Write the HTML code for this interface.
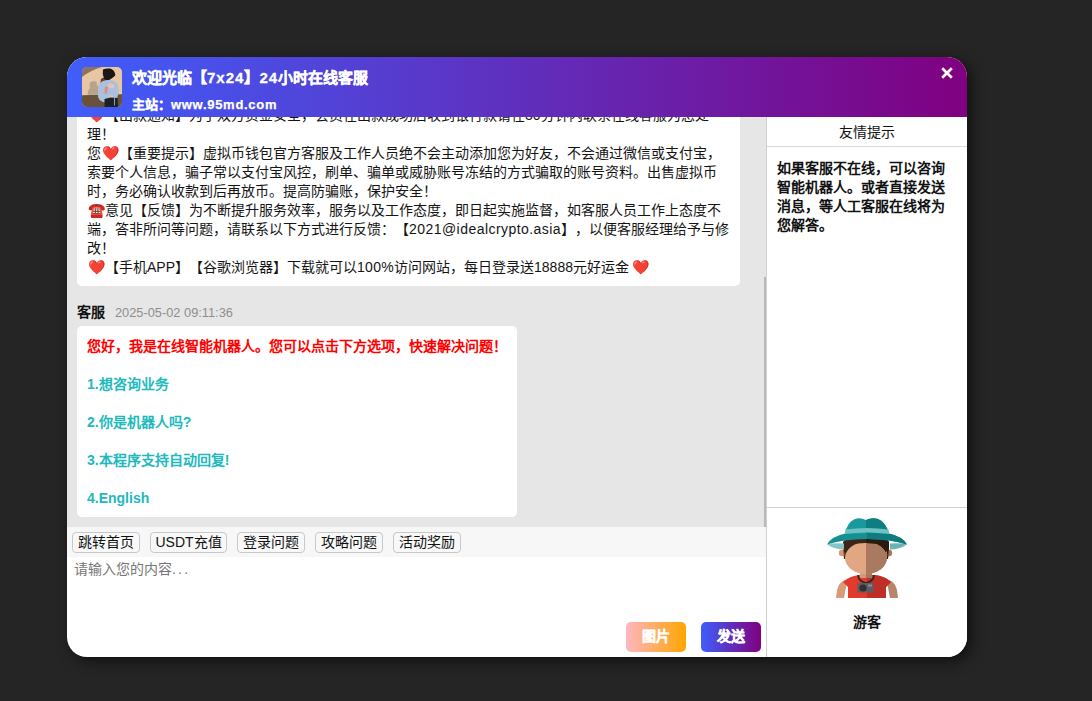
<!DOCTYPE html>
<html lang="zh-CN"><head><meta charset="utf-8">
<style>
*{margin:0;padding:0;box-sizing:border-box}
html,body{text-spacing-trim:space-all;width:1092px;height:701px;overflow:hidden;background:#252525;font-family:"Liberation Sans",sans-serif;font-size:14px;color:#222}
.dlg{position:absolute;left:67px;top:57px;width:900px;height:600px;border-radius:20px;overflow:hidden;background:#fff;box-shadow:4px 4px 14px rgba(0,0,0,.6)}
.chat{position:absolute;left:0;top:0;width:699px;height:470px;background:#e6e6e6;overflow:hidden}
.bub{position:absolute;left:10px;background:#fff;border-radius:5px;padding:10px;line-height:19px;white-space:nowrap;color:#141414}
.hdr{position:absolute;left:0;top:0;width:900px;height:60px;background:linear-gradient(90deg,#3f5efb,#800080)}
.av{position:absolute;left:15px;top:10px;width:40px;height:40px;border-radius:5px;overflow:hidden}
.t1{position:absolute;left:65px;top:11px;color:#fff;font-weight:bold;font-size:15px;line-height:20px;white-space:nowrap;-webkit-text-stroke:.3px #fff}
.t2{position:absolute;left:65px;top:39px;color:#fff;font-weight:bold;font-size:13px;line-height:18px;white-space:nowrap;-webkit-text-stroke:.25px #fff}
.x{position:absolute;left:874px;top:10px;width:12px;height:12px}
.sb{position:absolute;left:697px;top:220px;width:3px;height:250px;background:#b8b8b8}
.right{position:absolute;left:700px;top:60px;width:200px;height:540px;background:#fff}
.vline{position:absolute;left:699px;top:60px;width:1px;height:540px;background:#d0d0d0}
.rt{position:absolute;left:0;top:0;width:200px;height:30px;border-bottom:1px solid #d8d8d8;text-align:center;line-height:30px;font-size:14px;color:#111}
.tip{position:absolute;left:10px;top:42px;width:185px;font-weight:bold;line-height:19px;color:#111;white-space:nowrap}
.gline{position:absolute;left:0;top:390px;width:200px;height:1px;background:#d0d0d0}
.guest{position:absolute;left:0;top:497px;width:200px;text-align:center;font-weight:bold;color:#111;line-height:19px}
.tb{position:absolute;left:0;top:470px;width:699px;height:30px;background:#f7f7f7}
.btn{position:absolute;top:5px;height:21px;border:1px solid #c8c8c8;border-radius:4px;background:#f8f8f8;line-height:19px;text-align:center;color:#111;white-space:nowrap}
.ph{position:absolute;left:7px;top:503px;color:#777;line-height:19px}
.b2{position:absolute;top:565px;width:60px;height:30px;border-radius:5px;color:#fff;font-weight:bold;text-align:center;line-height:29px;-webkit-text-stroke:.4px #fff}
.lbl{position:absolute;left:10px;top:246px;white-space:nowrap;line-height:19px}
.lbl b{color:#111}
.lbl span{color:#8e8e8e;font-size:12.8px;margin-left:10px;position:relative;top:0px}
.ls{letter-spacing:1px}.ls2{letter-spacing:.7px}
.em{font-style:normal;margin-left:1px}
.red{color:#f00;font-weight:bold}
.tl{color:#22b9bd;font-weight:bold}
</style></head><body>
<div class="dlg">
  <div class="chat">
    <div class="bub" style="top:38px;width:663px;padding-top:11px;padding-bottom:9px"><i class="em">❤️</i>【出款通知】为了双方资金安全，会员在出款成功后收到银行款请在30分钟内联系在线客服为您处<br>理！<br>您<i class="em">❤️</i>【重要提示】虚拟币钱包官方客服及工作人员绝不会主动添加您为好友，不会通过微信或支付宝，<br>索要个人信息，骗子常以支付宝风控，刷单、骗单或威胁账号冻结的方式骗取的账号资料。出售虚拟币<br>时，务必确认收款到后再放币。提高防骗账，保护安全！<br><i class="em">☎️</i>意见【反馈】为不断提升服务效率，服务以及工作态度，即日起实施监督，如客服人员工作上态度不<br>端，答非所问等问题，请联系以下方式进行反馈：【<span style="letter-spacing:.45px">2021@idealcrypto.asia</span>】，以便客服经理给予与修<br>改！<br><i class="em">❤️</i>【手机APP】【谷歌浏览器】下载就可以<span style="letter-spacing:.3px">100%</span>访问网站，每日登录送18888元好运金<i class="em" style="margin-left:3px">❤️</i></div>
    <div class="lbl"><b>客服</b><span>2025-05-02 09:11:36</span></div>
    <div class="bub" style="top:269px;width:440px;height:191px;padding-top:11px"><span class="red">您好，我是在线智能机器人。您可以点击下方选项，快速解决问题！</span><br><br><span class="tl">1.想咨询业务</span><br><br><span class="tl">2.你是机器人吗?</span><br><br><span class="tl">3.本程序支持自动回复!</span><br><br><span class="tl">4.English</span></div>
    <div class="sb"></div>
  </div>
  <div class="tb">
    <div class="btn" style="left:5px;width:68px">跳转首页</div>
    <div class="btn" style="left:83px;width:77px">USDT充值</div>
    <div class="btn" style="left:170px;width:68px">登录问题</div>
    <div class="btn" style="left:248px;width:68px">攻略问题</div>
    <div class="btn" style="left:326px;width:68px">活动奖励</div>
  </div>
  <div class="ph">请输入您的内容<span style="letter-spacing:2.2px">...</span></div>
  <div class="b2" style="left:559px;background:linear-gradient(90deg,#ffb6c1,#ffa500)">图片</div>
  <div class="b2" style="left:634px;background:linear-gradient(90deg,#3f5efb,#800080)">发送</div>
  <div class="vline"></div>
  <div class="right">
    <div class="rt">友情提示</div>
    <div class="tip">如果客服不在线，可以咨询<br>智能机器人。或者直接发送<br>消息，等人工客服在线将为<br>您解答。</div>
    <div class="gline" style="top:390px"></div>
    <svg style="position:absolute;left:60px;top:400px" width="80" height="82" viewBox="0 0 80 82">
<path d="M10 73q2-8 8-10l2 2-3 16H9z" fill="#d99a78"/>
<path d="M70 73q-2-8-8-10l-2 2 3 16h8z" fill="#b7856a"/>
<path d="M16 65q6-6 17-7h14q11 1 17 7l-5 5v11H21V70z" fill="#e23b2c"/>
<path d="M40 58h7q11 1 17 7l-5 5v11H40z" fill="#be3026"/>
<rect x="33" y="52" width="12" height="9" fill="#d4997a"/>
<rect x="39" y="52" width="6" height="9" fill="#a9765c"/>
<path d="M31 58q0 6 8 8q8-2 8-8" fill="none" stroke="#2e2626" stroke-width="1.6"/>
<rect x="30.5" y="66" width="16" height="9.5" rx="1" fill="#5b5d60"/>
<circle cx="36" cy="71" r="3.6" fill="#2f3032"/>
<rect x="41" y="67.5" width="4" height="2" fill="#8c8f93"/>
<path d="M16 26q1-4 6-4h34q5 0 6 4l-1 16h-44z" fill="#3d2618"/>
<path d="M39 22h17q5 0 6 4l-1 16h-22z" fill="#2b1a10"/>
<circle cx="15" cy="36" r="3.2" fill="#d99a78"/>
<circle cx="62" cy="36" r="3.2" fill="#a9765c"/>
<ellipse cx="39" cy="41" rx="21" ry="16" fill="#e3a683"/>
<path d="M39 25a21 16 0 0 1 0 32z" fill="#a97a5f"/>
<path d="M16 26q1-4 6-4h34q5 0 6 4l-1 15q-1-10-5-13q-8-2-17-2q-9 0-17 2q-4 3-5 13z" fill="#3d2618"/>
<path d="M39 22h17q5 0 6 4l-1 15q-1-10-5-13q-8-2-17-2z" fill="#2b1a10"/>
<path d="M0 27.5q8-2 17-1l0 6q-9 0-17-5z" fill="#86c6c8"/>
<path d="M80 27.5q-8-2-17-1l0 6q9 0 17-5z" fill="#6fb0b2"/>
<path d="M0 27.5q4-8 20-11.5h40q16 3.5 20 11.5q-10-3-18-4q-10-1.5-22-1.5q-12 0-22 1.5q-8 1-18 4z" fill="#168f92"/>
<path d="M40 16h20q16 3.5 20 11.5q-10-3-18-4q-10-1.5-22-1.5z" fill="#0e7b7e"/>
<path d="M18 17q2-12 10-15q5-2 11 1q6-3 12-1q8 3 11 15z" fill="#19999c"/>
<path d="M39 3q6-3 12-1q8 3 11 15H39z" fill="#0d7f82"/>
<path d="M18.5 12.5q21-3 43 0l0.6 4.5q-22-3-44.2 0z" fill="#6fc2c3"/>
</svg>
    <div class="guest" style="top:496px">游客</div>
  </div>
  <div class="hdr">
    <div class="av"><svg width="40" height="40" viewBox="0 0 40 40">
<rect width="40" height="40" fill="#e7c7a3"/>
<path d="M0 0H20Q9 3 0 10Z" fill="#8b735f"/>
<path d="M0 28.3L40 27.2V40H0z" fill="#6a5139"/>
<path d="M8 15.5q2.5-2 6-1q1.5 1 .5 3q2.5 1.5 2.5 5v5.3H5.5q0-4.5 2.5-7q-1-1.5 0-5.3z" fill="#b7a38e"/>
<path d="M19 12q2-2 5-1l4 1-1 6h-9z" fill="#6b3a2e"/>
<path d="M16 22q0-6 5-8q4-1.5 7-1q6 1 8 5q1.5 5 0 10q-1 5-4 7l-9 .5q-6-1-7-6z" fill="#a9c0df"/>
<path d="M21 2.5q3-1.5 7-1q4 1 5 5q1 2-1.5 3.5q-2 2-5 3q-3 .5-4.5-1.5q-2-4-1-9z" fill="#1b1714"/>
<path d="M25.5 17.5q3-2 6.5 0.5q1 2-1 3q-2 .5-4-.5z" fill="#eac3b2"/>
<path d="M23 19.5q2-.5 3 1q0 3-1.5 6l-1.5 1q-1-4 0-8z" fill="#e48c82"/>
<path d="M27.5 28q2-.5 3.5 1.5l-.5 3.5-3 .5z" fill="#e9c4b0"/>
<path d="M22.5 32l6-1.5 7 .5 .5 9h-13.5z" fill="#1a2226"/>
<path d="M32.5 30.5v8" stroke="#9fb2c6" stroke-width=".9"/>
</svg></div>
    <div class="t1">欢迎光临【<span class="ls">7x24</span>】<span class="ls">24</span>小时在线客服</div>
    <div class="t2">主站：<span class="ls2">www.95md.com</span></div>
    <svg class="x" viewBox="0 0 12 12"><path d="M1.2 1.2L10.8 10.8M10.8 1.2L1.2 10.8" stroke="#fff" stroke-width="2.7" stroke-linecap="butt"/></svg>
  </div>
</div>
</body></html>
